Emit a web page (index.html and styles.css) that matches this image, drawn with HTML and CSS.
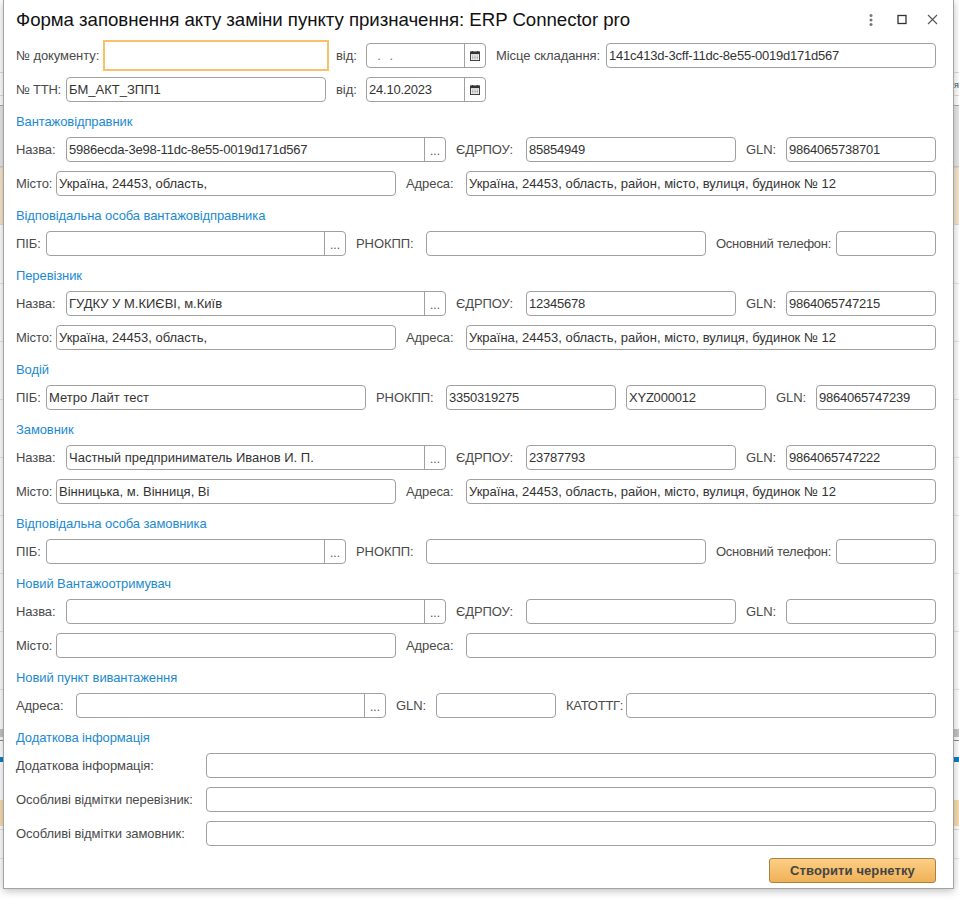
FILE: index.html
```html
<!DOCTYPE html>
<html lang="uk">
<head>
  <meta charset="UTF-8" />
  <title>Форма заповнення акту заміни пункту призначення</title>
  <link rel="stylesheet" href="styles.css">
</head>
<body>
  <span class="behind-text">я</span>
  <div class="window">
    <div class="header">
      <div class="title">Форма заповнення акту заміни пункту призначення: ERP Connector pro</div>
      <svg class="win-icon" width="70" height="14" viewBox="0 0 70 14">
        <circle cx="3" cy="2.5" r="1.5" fill="#777"/>
        <circle cx="3" cy="7" r="1.5" fill="#777"/>
        <circle cx="3" cy="11.5" r="1.5" fill="#777"/>
        <rect x="30" y="2.5" width="8" height="8" fill="none" stroke="#333" stroke-width="1.3"/>
        <path d="M60 2 L69 11 M69 2 L60 11" stroke="#555" stroke-width="1.1" fill="none"/>
      </svg>
    </div>

    <div class="row row-doc">
      <div class="label">№ документу:</div>
      <div class="field focused"></div>
      <div class="label">від:</div>
      <div class="field with-btn">
        <div class="value muted">&nbsp;&nbsp;.&nbsp;&nbsp;.</div>
        <div class="btn"><svg width="10" height="10" viewBox="0 0 11 11"><use href="#cal"/></svg></div>
      </div>
      <div class="label">Місце складання:</div>
      <div class="field"><div class="value num">141c413d-3cff-11dc-8e55-0019d171d567</div></div>
    </div>
    <div class="row row-ttn">
      <div class="label tight">№ ТТН:</div>
      <div class="field"><div class="value">БМ_АКТ_ЗПП1</div></div>
      <div class="label">від:</div>
      <div class="field with-btn">
        <div class="value num">24.10.2023</div>
        <div class="btn"><svg width="10" height="10" viewBox="0 0 11 11"><use href="#cal"/></svg></div>
      </div>
    </div>

    <div class="section">Вантажовідправник</div>
    <div class="row row-name">
      <div class="label">Назва:</div>
      <div class="field with-btn"><div class="value num">5986ecda-3e98-11dc-8e55-0019d171d567</div><div class="btn dots">...</div></div>
      <div class="label">ЄДРПОУ:</div>
      <div class="field"><div class="value num">85854949</div></div>
      <div class="label">GLN:</div>
      <div class="field"><div class="value num">9864065738701</div></div>
    </div>
    <div class="row row-addr">
      <div class="label">Місто:</div>
      <div class="field"><div class="value">Україна, 24453, область,</div></div>
      <div class="label">Адреса:</div>
      <div class="field"><div class="value">Україна, 24453, область, район, місто, вулиця, будинок № 12</div></div>
    </div>

    <div class="section">Відповідальна особа вантажовідправника</div>
    <div class="row row-person">
      <div class="label">ПІБ:</div>
      <div class="field with-btn"><div class="value"></div><div class="btn dots">...</div></div>
      <div class="label">РНОКПП:</div>
      <div class="field"></div>
      <div class="label tight">Основний телефон:</div>
      <div class="field"></div>
    </div>

    <div class="section">Перевізник</div>
    <div class="row row-name">
      <div class="label">Назва:</div>
      <div class="field with-btn"><div class="value">ГУДКУ У М.КИЄВІ, м.Київ</div><div class="btn dots">...</div></div>
      <div class="label">ЄДРПОУ:</div>
      <div class="field"><div class="value num">12345678</div></div>
      <div class="label">GLN:</div>
      <div class="field"><div class="value num">9864065747215</div></div>
    </div>
    <div class="row row-addr">
      <div class="label">Місто:</div>
      <div class="field"><div class="value">Україна, 24453, область,</div></div>
      <div class="label">Адреса:</div>
      <div class="field"><div class="value">Україна, 24453, область, район, місто, вулиця, будинок № 12</div></div>
    </div>

    <div class="section">Водій</div>
    <div class="row row-driver">
      <div class="label">ПІБ:</div>
      <div class="field"><div class="value">Метро Лайт тест</div></div>
      <div class="label">РНОКПП:</div>
      <div class="field"><div class="value num">3350319275</div></div>
      <div class="label"></div>
      <div class="field"><div class="value num">XYZ000012</div></div>
      <div class="label">GLN:</div>
      <div class="field"><div class="value num">9864065747239</div></div>
    </div>

    <div class="section">Замовник</div>
    <div class="row row-name">
      <div class="label">Назва:</div>
      <div class="field with-btn"><div class="value">Частный предприниматель Иванов И. П.</div><div class="btn dots">...</div></div>
      <div class="label">ЄДРПОУ:</div>
      <div class="field"><div class="value num">23787793</div></div>
      <div class="label">GLN:</div>
      <div class="field"><div class="value num">9864065747222</div></div>
    </div>
    <div class="row row-addr">
      <div class="label">Місто:</div>
      <div class="field"><div class="value">Вінницька, м. Вінниця, Ві</div></div>
      <div class="label">Адреса:</div>
      <div class="field"><div class="value">Україна, 24453, область, район, місто, вулиця, будинок № 12</div></div>
    </div>

    <div class="section">Відповідальна особа замовника</div>
    <div class="row row-person">
      <div class="label">ПІБ:</div>
      <div class="field with-btn"><div class="value"></div><div class="btn dots">...</div></div>
      <div class="label">РНОКПП:</div>
      <div class="field"></div>
      <div class="label tight">Основний телефон:</div>
      <div class="field"></div>
    </div>

    <div class="section">Новий Вантажоотримувач</div>
    <div class="row row-name">
      <div class="label">Назва:</div>
      <div class="field with-btn"><div class="value"></div><div class="btn dots">...</div></div>
      <div class="label">ЄДРПОУ:</div>
      <div class="field"></div>
      <div class="label">GLN:</div>
      <div class="field"></div>
    </div>
    <div class="row row-addr">
      <div class="label">Місто:</div>
      <div class="field"></div>
      <div class="label">Адреса:</div>
      <div class="field"></div>
    </div>

    <div class="section">Новий пункт вивантаження</div>
    <div class="row row-unload">
      <div class="label">Адреса:</div>
      <div class="field with-btn"><div class="value"></div><div class="btn dots">...</div></div>
      <div class="label">GLN:</div>
      <div class="field"></div>
      <div class="label tight">КАТОТТГ:</div>
      <div class="field"></div>
    </div>

    <div class="section">Додаткова інформація</div>
    <div class="row row-note">
      <div class="label">Додаткова інформація:</div>
      <div class="field"></div>
    </div>
    <div class="row row-note">
      <div class="label">Особливі відмітки перевізник:</div>
      <div class="field"></div>
    </div>
    <div class="row row-note">
      <div class="label">Особливі відмітки замовник:</div>
      <div class="field"></div>
    </div>

    <div class="footer">
      <button class="create-btn">Створити чернетку</button>
    </div>
  </div>

  <svg width="0" height="0" class="defs">
    <symbol id="cal" viewBox="0 0 11 11">
      <rect x="2" y="0" width="1.4" height="2" fill="#333"/>
      <rect x="7.6" y="0" width="1.4" height="2" fill="#333"/>
      <rect x="0.5" y="1" width="10" height="9.5" fill="#fff" stroke="#333"/>
      <rect x="0.5" y="1" width="10" height="2.5" fill="#333"/>
      <path d="M2 5.5h7M2 7h7M2 8.7h7" stroke="#666" stroke-width="1" stroke-dasharray="1 1"/>
    </symbol>
  </svg>
</body>
</html>
```

FILE: styles.css
```css
* { box-sizing: border-box; }

html, body { height: 100%; }

body {
  margin: 0;
  padding-left: 3px;
  overflow: hidden;
  font-family: "Liberation Sans", Arial, sans-serif;
  font-size: 13px;
  color: #4a4a4a;
  /* the list form that stays visible behind the dialog */
  background: linear-gradient(to bottom,
    #fff 0, #fff 72px, #ddd 72px, #ddd 73px, #fff 73px, #fff 95px,
    #ddd 95px, #ddd 96px, #fff 96px, #fff 105px,
    #aaa 105px, #aaa 106px, #e8e8e8 106px, #e8e8e8 166px,
    #ccc 166px, #ccc 167px, #f8e6cc 168px, #f8e6cc 224px,
    #ddd 224px, #ddd 225px, #fff 225px, #fff 283px,
    #e4e4e4 283px, #e4e4e4 284px, #fff 284px, #fff 341px,
    #e4e4e4 341px, #e4e4e4 342px, #fff 342px, #fff 399px,
    #e4e4e4 399px, #e4e4e4 400px, #fff 400px, #fff 457px,
    #e4e4e4 457px, #e4e4e4 458px, #fff 458px, #fff 515px,
    #e4e4e4 515px, #e4e4e4 516px, #fff 516px, #fff 573px,
    #e4e4e4 573px, #e4e4e4 574px, #fff 574px, #fff 631px,
    #e4e4e4 631px, #e4e4e4 632px, #fff 632px, #fff 689px,
    #e4e4e4 689px, #e4e4e4 690px, #fff 690px, #fff 729px,
    #c4c4c4 729px, #c4c4c4 737px, #fff 737px, #fff 740px,
    #888 740px, #888 741px, #fff 741px, #fff 757px,
    #0a7fc7 757px, #0a7fc7 762px, #fff 762px, #fff 800px,
    #f8dcb0 800px, #f8dcb0 826px, #fff 826px, #fff 829px,
    #ddd 829px, #ddd 830px, #fff 830px, #fff 858px,
    #e4e4e4 858px, #e4e4e4 859px, #fff 859px);
}

.behind-text {
  position: absolute;
  left: 954px;
  top: 80px;
  font-size: 9px;
  color: #444;
}

.defs { position: absolute; }

.window {
  width: 951px;
  height: 889px;
  padding: 0 17px 0 12px;
  background: #fff;
  border: 1px solid #a3a3a3;
  border-top: none;
  box-shadow: 0 2px 8px rgba(0, 0, 0, 0.25);
  display: flex;
  flex-direction: column;
  gap: 9px;
}

.header {
  height: 34px;
  flex: none;
  display: flex;
  align-items: center;
  justify-content: space-between;
  padding-top: 6px;
}

.title {
  font-size: 18.67px;
  letter-spacing: -0.04px;
  color: #111;
  white-space: nowrap;
}

.win-icon { margin-right: -2px; flex: none; }

.section {
  height: 17px;
  line-height: 21px;
  letter-spacing: -0.1px;
  color: #1c8ad0;
  flex: none;
}

.row {
  display: grid;
  height: 25px;
  flex: none;
}

.row-doc { grid-template-columns: 90px 220px 40px 120px 120px 1fr; }
.row-ttn { grid-template-columns: 50px 260px 40px 120px; }
.row-name { grid-template-columns: 50px 380px 80px 210px 50px 1fr; }
.row-addr { grid-template-columns: 40px 340px 70px 1fr; }
.row-person { grid-template-columns: 30px 300px 80px 280px 130px 1fr; }
.row-driver { grid-template-columns: 30px 320px 80px 170px 10px 140px 50px 1fr; }
.row-unload { grid-template-columns: 60px 310px 50px 120px 70px 1fr; }
.row-note { grid-template-columns: 190px 1fr; }

.label {
  line-height: 25px;
  padding-left: 10px;
  letter-spacing: -0.08px;
  white-space: nowrap;
}

.label:first-child { padding-left: 0; }

.label.tight { letter-spacing: -0.25px; }

.field {
  display: flex;
  height: 25px;
  line-height: 23px;
  background: #fff;
  border: 1px solid #a0a0a0;
  border-radius: 4px;
  color: #333;
  min-width: 0;
}

.field.focused {
  border: none;
  border-radius: 0;
  outline: 2px solid #fbc06a;
  outline-offset: 1px;
}

.value {
  flex: 1;
  padding-left: 2px;
  white-space: nowrap;
  overflow: hidden;
}

/* digits and latin ids run tighter than the cyrillic text */
.num { letter-spacing: -0.22px; }

.muted {
  color: #777;
  letter-spacing: 0.5px;
}

.btn {
  width: 21px;
  flex: none;
  border-left: 1px solid #a0a0a0;
  display: flex;
  align-items: center;
  justify-content: center;
  color: #555;
}

.btn.dots {
  align-items: flex-start;
  font-size: 12px;
  line-height: 27px;
}

.footer {
  display: flex;
  justify-content: flex-end;
  margin-top: 3px;
}

.create-btn {
  width: 167px;
  height: 25px;
  padding: 0;
  font-family: inherit;
  font-size: 13px;
  font-weight: bold;
  letter-spacing: 0.1px;
  color: #444;
  background: linear-gradient(to bottom, #fccf85, #f0b157);
  border: 1px solid #a98240;
  border-radius: 3px;
}
```
